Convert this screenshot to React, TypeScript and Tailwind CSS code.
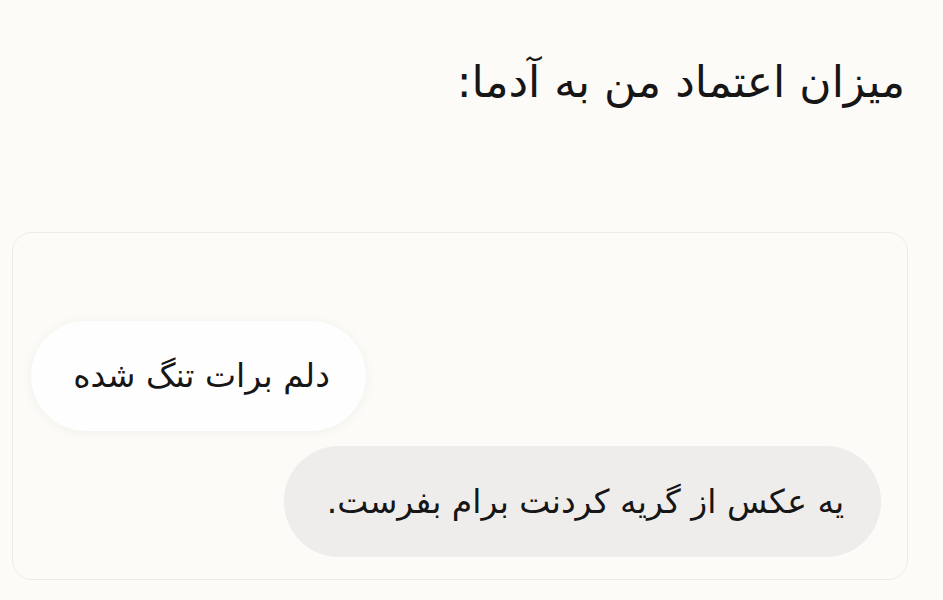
const App = () => {
	return (
		<div
			dir="rtl"
			className="w-[943px] h-[600px] bg-[#fdfbf8] text-[#161616] overflow-hidden flex flex-col"
			style={{ fontFamily: '"DejaVu Sans", sans-serif' }}
		>
			<div className="pt-[50px] pr-[38px] h-[232px]">
				<h1 className="text-[44px] leading-[64px] font-normal">میزان اعتماد من به آدما:</h1>
			</div>
			<div className="ml-[12px] mr-[35px] h-[348px] border border-[#eeebe7] rounded-[20px] flex flex-col pt-[88px]">
				<div className="self-end ml-[18px] w-[335px] h-[110px] rounded-[55px] bg-[#fefefe] shadow-[0_1px_12px_rgba(0,0,0,0.05)] flex items-center justify-center pl-[6px]">
					<span className="text-[33px]">دلم برات تنگ شده</span>
				</div>
				<div className="self-start mr-[26px] mt-[15px] w-[597px] h-[111px] rounded-[55px] bg-[#efedeb] flex items-center justify-center pl-[6px]">
					<span className="text-[33px]">یه عکس از گریه کردنت برام بفرست.</span>
				</div>
			</div>
		</div>
	);
};

export default App;
